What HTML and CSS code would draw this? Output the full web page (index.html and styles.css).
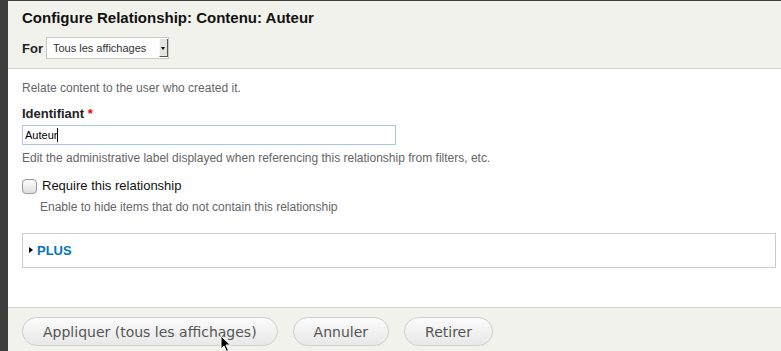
FILE: index.html
```html
<!DOCTYPE html>
<html lang="fr">

<head>
    <meta charset="UTF-8">
    <meta name="viewport" content="width=device-width, initial-scale=1.0">
    <title>Configure Relationship</title>
    <link rel="stylesheet" href="styles.css">
</head>

<body>
    <div class="dialog">
        <div class="dialog-header">
            <h1>Configure Relationship: Contenu: Auteur</h1>
            <div class="for-row">
                <label class="for-label" for="displays">For</label>
                <span class="select-wrap">
                    <select id="displays" class="select">
                        <option>Tous les affichages</option>
                        <option>Cet affichage (remplacer)</option>
                    </select>
                </span>
            </div>
        </div>

        <div class="dialog-body">
            <p class="intro">Relate content to the user who created it.</p>

            <div class="form-item">
                <label class="field-label" for="label">Identifiant <span class="required">*</span></label>
                <span class="input-wrap">
                    <input id="label" class="text-input" type="text" value="Auteur">
                    <span class="caret"></span>
                </span>
                <div class="description">Edit the administrative label displayed when referencing this relationship from filters, etc.</div>
            </div>

            <div class="form-item checkbox-item">
                <label class="checkbox-row">
                    <input type="checkbox" class="checkbox">
                    <span>Require this relationship</span>
                </label>
                <div class="description indent">Enable to hide items that do not contain this relationship</div>
            </div>

            <div class="fieldset">
                <a href="#" class="fieldset-toggle"><span class="arrow"></span>PLUS</a>
            </div>
        </div>

        <div class="dialog-footer">
            <button class="button">Appliquer (tous les affichages)</button>
            <button class="button">Annuler</button>
            <button class="button">Retirer</button>
            <svg class="pointer" width="12" height="18" viewBox="0 0 12 18">
                <path d="M1 1 L1 14 L4 11 L6.5 16.5 L8.5 15.5 L6 10 L10.5 10 Z" fill="#000" stroke="#fff" stroke-width="1"/>
            </svg>
        </div>
    </div>
</body>

</html>
```

FILE: styles.css
```css
body {
    margin: 0;
    background-color: #3c3c3c;
    font-family: "Liberation Sans", Arial, sans-serif;
    color: #222;
    height: 351px;
    overflow: hidden;
}

.dialog {
    margin: 1px 0 0 8px;
    background-color: #fff;
    height: 350px;
    display: flex;
    flex-direction: column;
}

.dialog-header {
    background-color: #f2f2ec;
    border-bottom: 1px solid #cccccc;
    padding: 8px 14px 9px;
}

h1 {
    margin: 0 0 10px;
    font-size: 15px;
    line-height: 18px;
    font-weight: bold;
    color: #111;
}

.for-row {
    display: flex;
    align-items: center;
    height: 22px;
}

.for-label {
    font-size: 13px;
    font-weight: bold;
    margin-right: 3px;
}

.select-wrap {
    position: relative;
    display: inline-block;
}

.select {
    appearance: none;
    -webkit-appearance: none;
    width: 123px;
    height: 22px;
    border: 1px solid #c8c8c8;
    border-radius: 0;
    background-color: #fff;
    font-family: "Liberation Sans", Arial, sans-serif;
    font-size: 11px;
    color: #333;
    padding: 0 0 0 6px;
    margin: 0;
}

.select-wrap::after {
    content: "";
    position: absolute;
    right: 1px;
    top: 2px;
    width: 9px;
    height: 18px;
    background-color: #e4e4e0;
    border-left: 1px solid #f8f8f8;
    border-right: 1px solid #555;
    border-bottom: 1px solid #555;
    box-sizing: border-box;
}

.select-wrap::before {
    content: "";
    position: absolute;
    right: 4px;
    top: 10px;
    border-left: 2px solid transparent;
    border-right: 2px solid transparent;
    border-top: 3px solid #000;
    z-index: 1;
}

.dialog-body {
    flex: 1;
    padding: 10px 5px 0 14px;
}

.intro {
    margin: 0 0 9px;
    font-size: 12px;
    line-height: 18px;
    color: #666;
}

.form-item {
    margin-bottom: 11px;
}

.field-label {
    display: block;
    font-size: 13px;
    line-height: 16px;
    font-weight: bold;
    margin-bottom: 3px;
}

.required {
    color: #e00;
}

.input-wrap {
    position: relative;
    display: block;
    width: 374px;
}

.text-input {
    display: block;
    box-sizing: border-box;
    width: 374px;
    height: 20px;
    border: 1px solid #a9c8ea;
    padding: 0 2px;
    font-family: "Liberation Sans", Arial, sans-serif;
    font-size: 11px;
    color: #000;
    outline: none;
}

.caret {
    position: absolute;
    left: 35px;
    top: 3px;
    width: 1px;
    height: 14px;
    background-color: #000;
}

.description {
    font-size: 12px;
    line-height: 18px;
    color: #666;
    margin-top: 4px;
}

.description.indent {
    margin: 4px 0 0 18px;
}

.checkbox-item {
    margin-top: 9px;
    margin-bottom: 17px;
}

.checkbox-row {
    display: flex;
    align-items: center;
    font-size: 13px;
    line-height: 16px;
    color: #111;
}

.checkbox {
    appearance: none;
    -webkit-appearance: none;
    width: 15px;
    height: 15px;
    margin: 0 5px 0 0;
    border: 1px solid #999;
    border-radius: 4px;
    background: linear-gradient(#fdfdfd, #dedede);
    box-sizing: border-box;
}

.fieldset {
    border: 1px solid #cccccc;
    height: 35px;
    box-sizing: border-box;
    display: flex;
    align-items: center;
    padding: 0 6px 1px;
}

.fieldset-toggle {
    display: flex;
    align-items: center;
    font-size: 13px;
    font-weight: bold;
    color: #0074bd;
    text-decoration: none;
}

.arrow {
    display: inline-block;
    border-top: 3px solid transparent;
    border-bottom: 3px solid transparent;
    border-left: 4px solid #000;
    margin: 0 4px 0 0;
}

.dialog-footer {
    position: relative;
    background-color: #f2f2ec;
    border-top: 1px solid #cccccc;
    height: 44px;
    padding: 9px 14px 0;
    box-sizing: border-box;
    display: flex;
    align-items: flex-start;
    gap: 15px;
}

.button {
    height: 29px;
    padding: 0 20px;
    border: 1px solid #cfcfcf;
    border-radius: 15px;
    background: linear-gradient(#fbfbfb, #e8e8e8);
    font-family: "DejaVu Sans", Verdana, sans-serif;
    font-size: 14px;
    color: #555;
    cursor: pointer;
}

.pointer {
    position: absolute;
    left: 212px;
    top: 27px;
}
```
